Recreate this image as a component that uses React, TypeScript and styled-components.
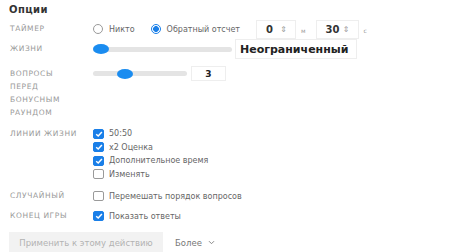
import React from "react"
import styled, { createGlobalStyle } from "styled-components"

const Global = createGlobalStyle`
  body {
    margin: 0;
    background: #fff;
    font-family: "DejaVu Sans", "Noto Sans", sans-serif;
    color: #333;
  }
`

const Page = styled.div`
  width: 474px;
  height: 252px;
  padding: 3px 0 0 9px;
  box-sizing: border-box;
  overflow: hidden;
`

const Title = styled.h1`
  margin: 0 0 2px;
  font-size: 10px;
  font-weight: 700;
  letter-spacing: 0.4px;
  color: #333;
  line-height: 14px;
`

const Row = styled.div<{ $mt?: number }>`
  display: grid;
  grid-template-columns: 84px 1fr;
  align-items: start;
  min-height: 20px;
  margin-top: ${p => p.$mt ?? 0}px;
`

const Label = styled.div<{ $lh?: number }>`
  font-size: 7.5px;
  letter-spacing: 0.6px;
  text-transform: uppercase;
  color: #9a9a9a;
  line-height: ${p => p.$lh ?? 20}px;
  padding-left: 1px;
`

const Controls = styled.div<{ $h?: number }>`
  display: flex;
  align-items: center;
  height: ${p => p.$h ?? 20}px;
`

const Column = styled.div`
  display: flex;
  flex-direction: column;
`

const RadioItem = styled.label`
  display: flex;
  align-items: center;
  gap: 6px;
  font-size: 8px;
  color: #666;
  margin-right: 16px;
`

const RadioDot = styled.span<{ $on?: boolean }>`
  width: 10px;
  height: 10px;
  border-radius: 50%;
  box-sizing: border-box;
  border: 1px solid ${p => (p.$on ? "#1a7fe8" : "#9a9a9a")};
  background: ${p => (p.$on ? "radial-gradient(circle, #1a7fe8 0 2.6px, #fff 3.2px)" : "#fff")};
`

const NumberBox = styled.div<{ $w: number }>`
  display: flex;
  align-items: center;
  justify-content: space-between;
  width: ${p => p.$w}px;
  height: 19px;
  box-sizing: border-box;
  padding: 0 8px 0 9px;
  border: 1px solid #eeeeee;
  font-size: 10px;
  font-weight: 700;
  color: #333;
`

const Spin = styled.span`
  font-size: 8px;
  color: #999;
  font-weight: 400;
`

const Unit = styled.span`
  font-size: 6px;
  color: #999;
  margin: 2px 10px 0 5px;
`

const Slider = styled.div<{ $w: number }>`
  position: relative;
  width: ${p => p.$w}px;
  height: 5px;
  border-radius: 3px;
  background: #e4e4e4;
`

const Thumb = styled.span`
  position: absolute;
  top: 50%;
  width: 16px;
  height: 10px;
  border-radius: 50%;
  background: #1a8cf0;
  transform: translate(-50%, -50%);
`

const ValueBox = styled.div<{ $w: number; $h: number; $ml: number; $center?: boolean }>`
  width: ${p => p.$w}px;
  height: ${p => p.$h}px;
  margin-left: ${p => p.$ml}px;
  box-sizing: border-box;
  border: 1px solid #eeeeee;
  display: flex;
  align-items: center;
  justify-content: ${p => (p.$center ? "center" : "flex-start")};
  padding-left: ${p => (p.$center ? 0 : 4)}px;
  font-size: ${p => (p.$center ? 9 : 11)}px;
  font-weight: 700;
  color: #222;
  white-space: nowrap;
`

const CheckItem = styled.div`
  display: flex;
  align-items: center;
  gap: 5px;
  height: 13.5px;
  font-size: 8px;
  color: #666;
  white-space: nowrap;
`

const Box = styled.span<{ $on?: boolean }>`
  width: 11px;
  height: 10px;
  box-sizing: border-box;
  border-radius: 2px;
  border: 1px solid ${p => (p.$on ? "#1a7fe8" : "#9a9a9a")};
  background: ${p => (p.$on ? "#1a7fe8" : "#fff")};
  display: flex;
  align-items: center;
  justify-content: center;
`

const Footer = styled.div`
  display: flex;
  align-items: center;
  margin-top: 6px;
  gap: 12px;
`

const ApplyButton = styled.button`
  width: 154px;
  height: 21px;
  border: none;
  background: #f2f2f2;
  color: #b3b3b3;
  font-family: inherit;
  font-size: 8.5px;
  padding: 0;
  white-space: nowrap;
`

const More = styled.span`
  display: flex;
  align-items: center;
  gap: 6px;
  font-size: 8.5px;
  color: #777;
`

const Check = ({ on, children }: { on?: boolean; children: React.ReactNode }) => (
  <CheckItem>
    <Box $on={on}>
      {on && (
        <svg width="8" height="8" viewBox="0 0 8 8">
          <path d="M1.2 4.2 L3.2 6 L6.9 2" fill="none" stroke="#fff" strokeWidth="1.5" />
        </svg>
      )}
    </Box>
    {children}
  </CheckItem>
)

export default function App() {
  return (
    <>
      <Global />
      <Page>
        <Title>Опции</Title>
        <Row>
          <Label>Таймер</Label>
          <Controls>
            <RadioItem>
              <RadioDot />
              Никто
            </RadioItem>
            <RadioItem>
              <RadioDot $on />
              Обратный отсчет
            </RadioItem>
            <NumberBox $w={40}>
              0<Spin>⇕</Spin>
            </NumberBox>
            <Unit>м</Unit>
            <NumberBox $w={43}>
              30<Spin>⇕</Spin>
            </NumberBox>
            <Unit>с</Unit>
          </Controls>
        </Row>
        <Row>
          <Label>Жизни</Label>
          <Controls>
            <Slider $w={139}>
              <Thumb style={{ left: 8 }} />
            </Slider>
            <ValueBox $w={122} $h={20} $ml={3}>
              Неограниченный
            </ValueBox>
          </Controls>
        </Row>
        <Row $mt={8}>
          <Label $lh={13}>
            Вопросы
            <br />
            перед
            <br />
            бонусным
            <br />
            раундом
          </Label>
          <Controls $h={13}>
            <Slider $w={94}>
              <Thumb style={{ left: 32 }} />
            </Slider>
            <ValueBox $w={35} $h={15} $ml={4} $center>
              3
            </ValueBox>
          </Controls>
        </Row>
        <Row $mt={8}>
          <Label $lh={13.5}>Линии жизни</Label>
          <Column>
            <Check on>50:50</Check>
            <Check on>x2 Оценка</Check>
            <Check on>Дополнительное время</Check>
            <Check>Изменять</Check>
          </Column>
        </Row>
        <Row $mt={5}>
          <Label>Случайный</Label>
          <Controls>
            <Check>Перемешать порядок вопросов</Check>
          </Controls>
        </Row>
        <Row>
          <Label>Конец игры</Label>
          <Controls>
            <Check on>Показать ответы</Check>
          </Controls>
        </Row>
        <Footer>
          <ApplyButton>Применить к этому действию</ApplyButton>
          <More>
            Более
            <svg width="7" height="5" viewBox="0 0 7 5">
              <path d="M1 1.2 L3.5 3.7 L6 1.2" fill="none" stroke="#888" strokeWidth="1" />
            </svg>
          </More>
        </Footer>
      </Page>
    </>
  )
}
